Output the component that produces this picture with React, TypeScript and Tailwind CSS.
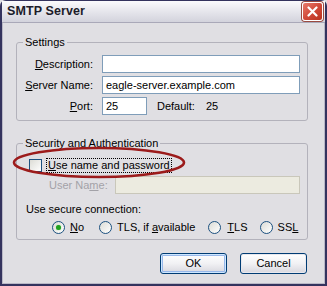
import React from "react";

const font = { fontFamily: '"Liberation Sans", Arial, sans-serif' };

function Radio({ checked }: { checked?: boolean }) {
  return (
    <span className="flex h-[13px] w-[13px] shrink-0 items-center justify-center rounded-full border border-[#1c5180] bg-gradient-to-br from-[#dcdcd6] to-white">
      {checked ? (
        <span className="h-[5px] w-[5px] rounded-full bg-[#21a121] shadow-[0_0_1px_#5fd35f]" />
      ) : null}
    </span>
  );
}

function XpButton({ label, focused }: { label: string; focused?: boolean }) {
  return (
    <button
      type="button"
      className={`h-[21px] w-[67px] rounded-[3px] border border-[#003c74] bg-gradient-to-b from-white via-[#f1f1f4] to-[#d8d7de] text-[11px] text-black ${
        focused
          ? "shadow-[inset_0_0_0_1px_#cee7ff,inset_0_0_0_2px_#98b8ea]"
          : "shadow-[inset_0_0_0_1px_#e8e8ee]"
      }`}
    >
      {label}
    </button>
  );
}

export default function App() {
  return (
    <div
      className="relative h-[286px] w-[327px] overflow-hidden bg-[#e0dfe3] text-[11px] leading-[13px] text-black"
      style={font}
    >
      <div className="flex h-full w-full flex-col rounded-t-[6px] border-x-[2px] border-b-[2px] border-t border-[#34335e] shadow-[inset_1px_0_0_#b9b8c6,inset_-1px_0_0_#b9b8c6,inset_0_-1px_0_#b9b8c6]">
        {/* title bar */}
        <div className="flex h-[22px] shrink-0 items-center justify-between border-b border-[#a9a8b8] bg-gradient-to-b from-[#fbfbfd] via-[#e6e6ec] to-[#d3d3dc] pl-[5px] pr-[2px]">
          <span className="text-[12.5px] font-bold tracking-[0.1px] text-[#1c1c2a]">
            SMTP Server
          </span>
          <span className="flex h-[19px] w-[21px] items-center justify-center rounded-[3px] border border-white bg-gradient-to-br from-[#e87a6c] via-[#d14a3a] to-[#b8331f] shadow-[0_0_0_1px_#9a4a40]">
            <svg width="11" height="11" viewBox="0 0 11 11">
              <path
                d="M1.5 1.5 L9.5 9.5 M9.5 1.5 L1.5 9.5"
                stroke="white"
                strokeWidth="2.2"
                strokeLinecap="round"
              />
            </svg>
          </span>
        </div>

        {/* body */}
        <div className="flex flex-1 flex-col pl-[14px]">
          <fieldset className="mt-[13px] w-[292px] rounded-[3px] border border-[#b3b2bb] pb-[5px] pl-0 pr-[7px] pt-[6px]">
            <legend className="ml-[6px] px-[2px]">Settings</legend>
            <div className="grid grid-cols-[76px_1fr] items-center gap-x-[9px] gap-y-[3px]">
              <span className="text-right">
                <u>D</u>escription:
              </span>
              <div className="h-[18px] border border-[#7f9db9] bg-white" />
              <span className="text-right">
                <u>S</u>erver Name:
              </span>
              <div className="flex h-[18px] items-center border border-[#7f9db9] bg-white px-[3px]">
                eagle-server.example.com
              </div>
              <span className="text-right">
                <u>P</u>ort:
              </span>
              <div className="flex items-center">
                <div className="flex h-[18px] w-[45px] items-center border border-[#7f9db9] bg-white px-[3px]">
                  25
                </div>
                <span className="ml-[10px]">Default:</span>
                <span className="ml-[11px]">25</span>
              </div>
            </div>
          </fieldset>

          <fieldset className="mt-[16px] w-[292px] rounded-[3px] border border-[#b3b2bb] pb-[5px] pl-0 pr-[7px] pt-[8px]">
            <legend className="ml-[6px] px-[2px]">Security and Authentication</legend>
            <div className="flex h-[15px] items-center pl-[12px]">
              <span className="h-[13px] w-[13px] border border-[#1c5180] bg-gradient-to-br from-[#dcdcd6] to-white" />
              <span className="ml-[4px] border border-dotted border-black px-[1px] leading-[13px]">
                <u>U</u>se name and password
              </span>
            </div>
            <div className="mt-[3px] flex items-center pl-[32px]">
              <span className="w-[66px] text-[#a3a2a8]">
                User Na<u>m</u>e:
              </span>
              <div className="h-[18px] w-[185px] border border-[#c9c7ba] bg-[#ecebe0]" />
            </div>
            <div className="mt-[9px] pl-[9px]">Use secure connection:</div>
            <div className="mt-[5px] flex items-center whitespace-nowrap pl-[35px]">
              <Radio checked />
              <span className="ml-[5px]">
                <u>N</u>o
              </span>
              <span className="ml-[15px]">
                <Radio />
              </span>
              <span className="ml-[5px]">
                TLS, if <u>a</u>vailable
              </span>
              <span className="ml-[13px]">
                <Radio />
              </span>
              <span className="ml-[6px]">
                <u>T</u>LS
              </span>
              <span className="ml-[12px]">
                <Radio />
              </span>
              <span className="ml-[5px]">
                SS<u>L</u>
              </span>
            </div>
          </fieldset>

          <div className="mt-[13px] flex w-[292px] justify-end gap-[13px] pr-[1px]">
            <XpButton label="OK" focused />
            <XpButton label="Cancel" />
          </div>
        </div>
      </div>

      {/* red annotation ellipse */}
      <svg
        className="pointer-events-none absolute left-[12px] top-[146px]"
        width="174"
        height="33"
        viewBox="0 0 174 33"
      >
        <ellipse
          cx="87"
          cy="16.5"
          rx="85"
          ry="14.5"
          fill="none"
          stroke="#9c1b1b"
          strokeWidth="2.6"
        />
      </svg>
    </div>
  );
}
